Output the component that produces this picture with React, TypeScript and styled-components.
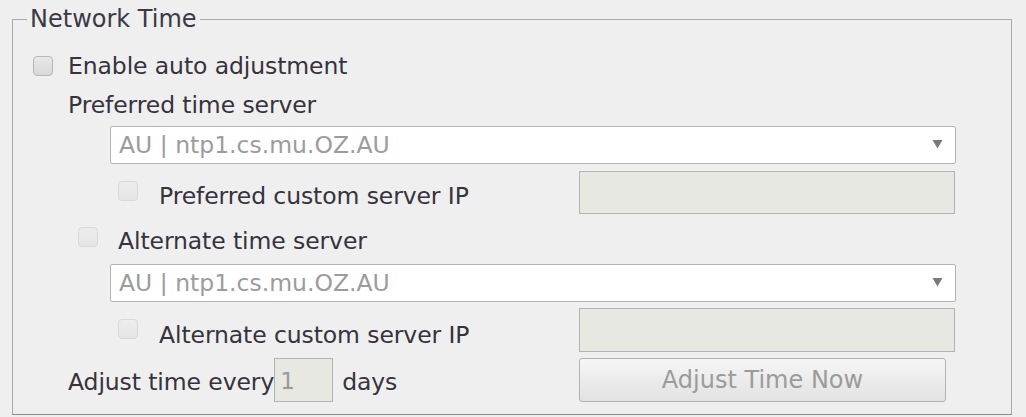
import React from "react";
import styled, { createGlobalStyle } from "styled-components";

const GlobalStyle = createGlobalStyle`
  html, body {
    margin: 0;
    padding: 0;
    background: #efefef;
  }
  body {
    font-family: "DejaVu Sans", "Liberation Sans", sans-serif;
    color: #37323d;
  }
`;

const Frame = styled.fieldset`
  margin: 7px 14px 0 12px;
  padding: 0;
  height: 408px;
  box-sizing: border-box;
  border: 1px solid #a9a9a9;
  border-bottom-color: #8a8a8a;
`;

const Legend = styled.legend`
  margin-left: 14px;
  padding: 0 3px;
  font-size: 24px;
  line-height: 24px;
  color: #3d3845;
`;

const Body = styled.div`
  display: flex;
  flex-direction: column;
  padding-left: 20px;
`;

const Row = styled.div<{ $indent: number; $height: number; $top: number }>`
  display: flex;
  align-items: center;
  margin-left: ${(p) => p.$indent}px;
  margin-top: ${(p) => p.$top}px;
  height: ${(p) => p.$height}px;
`;

const Box = styled.span<{ $faint?: boolean; $shift?: number }>`
  display: inline-block;
  flex: none;
  width: 20px;
  height: 20px;
  box-sizing: border-box;
  border-radius: 4px;
  position: relative;
  top: ${(p) => p.$shift ?? 0}px;
  border: 1px solid ${(p) => (p.$faint ? "#d8d8d8" : "#b7b7b7")};
  background: ${(p) =>
    p.$faint
      ? "linear-gradient(#eeeeee, #e5e5e5)"
      : "linear-gradient(#e8e8e8, #d8d8d8)"};
`;

const Label = styled.span<{ $gap?: number; $shift?: number }>`
  margin-left: ${(p) => p.$gap ?? 0}px;
  position: relative;
  top: ${(p) => p.$shift ?? 0}px;
  font-size: 23.5px;
  letter-spacing: -0.1px;
  white-space: nowrap;
`;

const Select = styled.div`
  flex: none;
  width: 846px;
  height: 38px;
  box-sizing: border-box;
  border: 1px solid #b4b4b4;
  border-radius: 2px;
  background: #ffffff;
  display: flex;
  align-items: center;
  justify-content: space-between;
  padding: 0 12px 0 8px;
  font-size: 23.5px;
  color: #9c9c9c;
`;

const Arrow = styled.svg`
  flex: none;
  width: 11px;
  height: 10px;
  margin-top: -2px;
`;

const RightCol = styled.div<{ $height: number }>`
  margin-left: auto;
  margin-right: 56px;
  width: 376px;
  height: ${(p) => p.$height}px;
  display: flex;
`;

const Field = styled.div<{ $width: number }>`
  flex: none;
  width: ${(p) => p.$width}px;
  height: 100%;
  box-sizing: border-box;
  border: 1px solid #b3b3b3;
  background: #e8e8e2;
  font-size: 23px;
  line-height: 1;
  color: #9a9a9a;
  padding: 11px 0 0 5px;
`;

const Button = styled.div`
  flex: none;
  width: 367px;
  height: 100%;
  box-sizing: border-box;
  border: 1px solid #b1b1b1;
  border-radius: 3px;
  background: linear-gradient(#f6f6f6, #e2e2e2);
  display: flex;
  align-items: center;
  justify-content: center;
  font-size: 24px;
  color: #9b9b9b;
`;

const DropArrow = () => (
  <Arrow viewBox="0 0 11 10">
    <path d="M0.5 1 L10.5 1 L5.5 9.5 Z" fill="#7a7a7a" />
  </Arrow>
);

export default function App() {
  return (
    <>
      <GlobalStyle />
      <Frame>
        <Legend>Network Time</Legend>
        <Body>
          <Row $indent={0} $height={20} $top={25}>
            <Box />
            <Label $gap={15}>Enable auto adjustment</Label>
          </Row>
          <Row $indent={35} $height={26} $top={16}>
            <Label>Preferred time server</Label>
          </Row>
          <Row $indent={77} $height={38} $top={8}>
            <Select>
              <span>AU | ntp1.cs.mu.OZ.AU</span>
              <DropArrow />
            </Select>
          </Row>
          <Row $indent={85} $height={43} $top={7}>
            <Box $faint $shift={-2} />
            <Label $gap={21} $shift={3}>
              Preferred custom server IP
            </Label>
            <RightCol $height={43}>
              <Field $width={376} />
            </RightCol>
          </Row>
          <Row $indent={45} $height={22} $top={12}>
            <Box $faint />
            <Label $gap={20} $shift={4}>
              Alternate time server
            </Label>
          </Row>
          <Row $indent={77} $height={38} $top={16}>
            <Select>
              <span>AU | ntp1.cs.mu.OZ.AU</span>
              <DropArrow />
            </Select>
          </Row>
          <Row $indent={85} $height={44} $top={6}>
            <Box $faint $shift={-1} />
            <Label $gap={21} $shift={5}>
              Alternate custom server IP
            </Label>
            <RightCol $height={44}>
              <Field $width={376} />
            </RightCol>
          </Row>
          <Row $indent={35} $height={44} $top={6}>
            <Label $shift={2}>Adjust time every</Label>
            <Field $width={59}>1</Field>
            <Label $gap={9} $shift={2}>
              days
            </Label>
            <RightCol $height={44}>
              <Button>Adjust Time Now</Button>
            </RightCol>
          </Row>
        </Body>
      </Frame>
    </>
  );
}
